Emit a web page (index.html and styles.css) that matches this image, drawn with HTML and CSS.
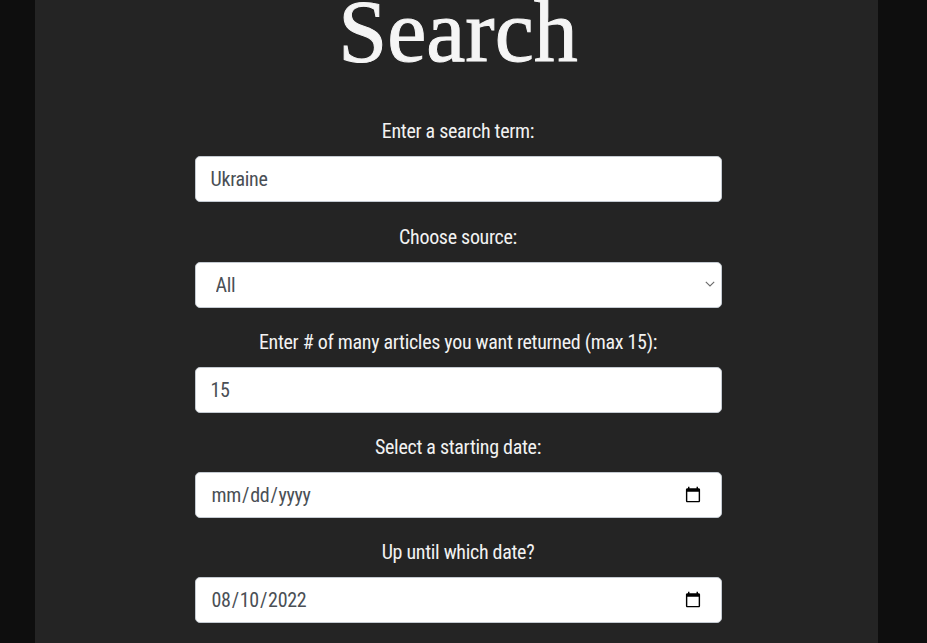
FILE: index.html
```html
<!DOCTYPE html>
<html lang="en">
<head>
<meta charset="utf-8">
<title>Search</title>
<link rel="stylesheet" href="styles.css">
</head>
<body>
<main class="page">
  <h1 class="title">Search</h1>
  <form class="search-form">
    <label class="field-label" for="term">Enter a search term:</label>
    <input class="field" id="term" type="text" value="Ukraine">

    <label class="field-label" for="source">Choose source:</label>
    <div class="select-wrap">
      <select class="field field-select" id="source">
        <option>All</option>
      </select>
      <svg class="chevron" width="10" height="6" viewBox="0 0 10 6" aria-hidden="true">
        <path d="M0.8 0.8 L5 5 L9.2 0.8" fill="none" stroke="#6b6b6b" stroke-width="1.1"/>
      </svg>
    </div>

    <label class="field-label" for="count">Enter # of many articles you want returned (max 15):</label>
    <input class="field" id="count" type="number" value="15">

    <label class="field-label" for="start">Select a starting date:</label>
    <input class="field" id="start" type="date">

    <label class="field-label" for="end">Up until which date?</label>
    <input class="field" id="end" type="date" value="2022-08-10">
  </form>
</main>
</body>
</html>
```

FILE: styles.css
```css
html, body {
  margin: 0;
  padding: 0;
  background: #0e0e0e;
  height: 100%;
  overflow: hidden;
}

.page {
  margin: 0 49px 0 35px;
  padding-left: 3px;
  min-height: 100%;
  background: #242424;
  display: flex;
  flex-direction: column;
  align-items: center;
  font-family: "Roboto Condensed", "Open Sans", sans-serif;
}

.title {
  margin: 0;
  font-family: "Liberation Serif", serif;
  font-weight: normal;
  font-size: 88px;
  line-height: 0.72;
  color: #f5f5f5;
  -webkit-text-stroke: 1px #f5f5f5;
}

.search-form {
  margin-top: 53px;
  width: 527px;
  display: flex;
  flex-direction: column;
  align-items: stretch;
}

.field-label {
  display: block;
  text-align: center;
  font-size: 20px;
  letter-spacing: -0.3px;
  line-height: 30px;
  color: #f2f2f2;
  margin-bottom: 10px;
}

.field {
  box-sizing: border-box;
  height: 46px;
  width: 100%;
  margin: 0 0 19.25px 0;
  padding: 0 15px;
  border: 1px solid #c4cad1;
  border-radius: 5px;
  background: #ffffff;
  color: #4a4f55;
  font-family: inherit;
  font-size: 20px;
  letter-spacing: -0.3px;
  outline: none;
}

.select-wrap {
  position: relative;
}

.field-select {
  appearance: none;
  -webkit-appearance: none;
  padding-left: 20px;
}

.chevron {
  position: absolute;
  right: 7px;
  top: 19px;
}

.field::-webkit-calendar-picker-indicator {
  font-size: 18px;
  margin-right: 2px;
}
```
